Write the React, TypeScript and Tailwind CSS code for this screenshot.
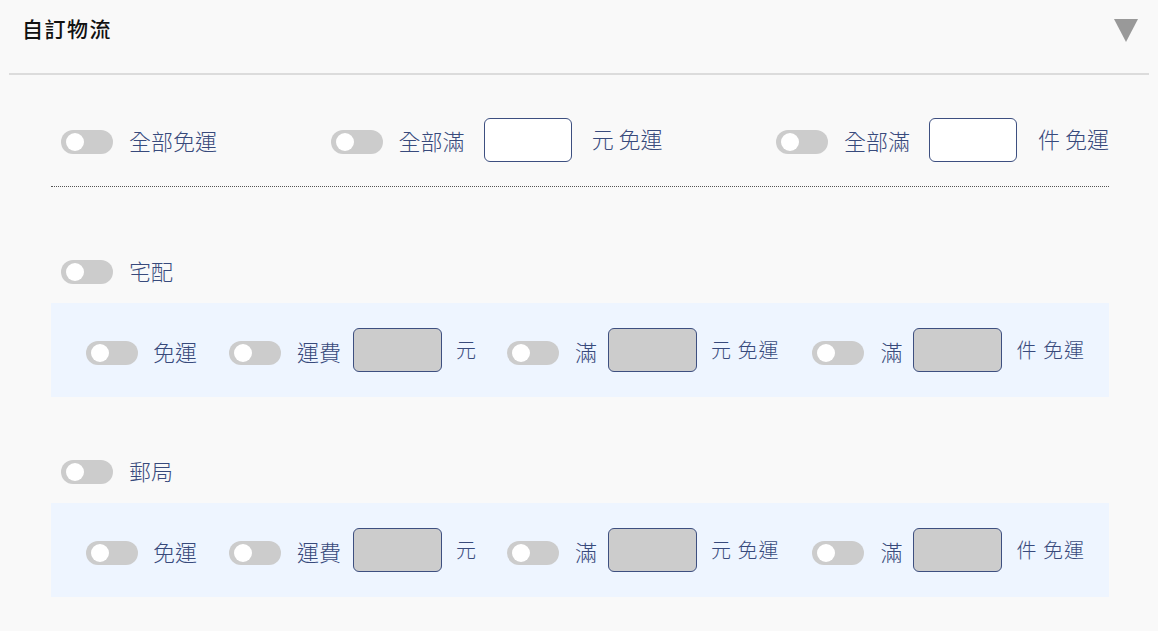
import React from "react";

const Toggle = () => (
    <div className="w-[52px] h-[24px] rounded-full bg-[#cccccc] flex items-center pl-[5px] shrink-0">
        <div className="w-[18px] h-[18px] rounded-full bg-white" />
    </div>
)

const Box = ({ white }: { white?: boolean }) => (
    <div className={`h-[44px] rounded-[6px] border border-[#3d4f80] shrink-0 ${white ? 'w-[88px] bg-white' : 'w-[89px] bg-[#cccccc]'}`} />
)

const Label = ({ children, className = '' }: { children: React.ReactNode, className?: string }) => (
    <span className={`text-[22px] font-light text-[#384a7c] leading-none whitespace-nowrap ${className}`}>{children}</span>
)

const Small = ({ children, className = '' }: { children: React.ReactNode, className?: string }) => (
    <span className={`text-[20px] font-light text-[#384a7c] tracking-[1px] leading-none whitespace-nowrap ${className}`}>{children}</span>
)

const Options = () => (
    <div className="mt-[19px] h-[94px] bg-[#eef5ff] flex items-center pl-[35px]">
        <div className="flex items-center">
            <div className="mt-[6px]"><Toggle /></div>
            <Label className="ml-[15px] mt-[1px]">免運</Label>
        </div>
        <div className="flex items-center ml-[32px]">
            <div className="mt-[6px]"><Toggle /></div>
            <Label className="ml-[16px] mt-[1px]">運費</Label>
            <div className="ml-[12px]"><Box /></div>
            <Small className="ml-[14px]">元</Small>
        </div>
        <div className="flex items-center ml-[30px]">
            <div className="mt-[6px]"><Toggle /></div>
            <Label className="ml-[16px] mt-[1px]">滿</Label>
            <div className="ml-[11px]"><Box /></div>
            <Small className="ml-[14px]">元 免運</Small>
        </div>
        <div className="flex items-center ml-[33px]">
            <div className="mt-[6px]"><Toggle /></div>
            <Label className="ml-[16px] mt-[1px]">滿</Label>
            <div className="ml-[11px]"><Box /></div>
            <Small className="ml-[14px]">件 免運</Small>
        </div>
    </div>
)

const Method = ({ title }: { title: string }) => (
    <div>
        <div className="flex items-center pl-[10px] h-[24px]">
            <Toggle />
            <Label className="ml-[16px] -mt-[5px]">{title}</Label>
        </div>
        <Options />
    </div>
)

export default function App() {
    return (
        <div className="w-[1158px] h-[631px] bg-[#f9f9f9] overflow-hidden" style={{ fontFamily: '"Noto Sans CJK TC", "Noto Sans", sans-serif' }}>
            <div className="mx-[9px] h-[75px] border-b-2 border-[#dcdcdc] flex items-center justify-between pl-[13px] pr-[11px] pb-[16px]">
                <span className="text-[21px] font-medium text-[#111] tracking-[1.5px]">自訂物流</span>
                <svg width="24" height="23" viewBox="0 0 24 23" className="mt-[4px]">
                    <polygon points="0,0 24,0 12,23" fill="#999999" />
                </svg>
            </div>

            <div className="ml-[51px] w-[1058px]">
                <div className="mt-[43px] h-[44px] flex items-center justify-between pl-[10px]">
                    <div className="flex items-center">
                        <div className="mt-[4px]"><Toggle /></div>
                        <Label className="ml-[16px]">全部免運</Label>
                    </div>
                    <div className="flex items-center">
                        <div className="mt-[4px]"><Toggle /></div>
                        <Label className="ml-[16px]">全部滿</Label>
                        <div className="ml-[19px]"><Box white /></div>
                        <Label className="ml-[20px] -mt-[4px]">元 免運</Label>
                    </div>
                    <div className="flex items-center">
                        <div className="mt-[4px]"><Toggle /></div>
                        <Label className="ml-[16px]">全部滿</Label>
                        <div className="ml-[19px]"><Box white /></div>
                        <Label className="ml-[21px] -mt-[4px]">件 免運</Label>
                    </div>
                </div>

                <div className="mt-[24px] border-t border-dotted border-[#555]" />

                <div className="mt-[73px]">
                    <Method title="宅配" />
                </div>
                <div className="mt-[63px]">
                    <Method title="郵局" />
                </div>
            </div>
        </div>
    )
}
